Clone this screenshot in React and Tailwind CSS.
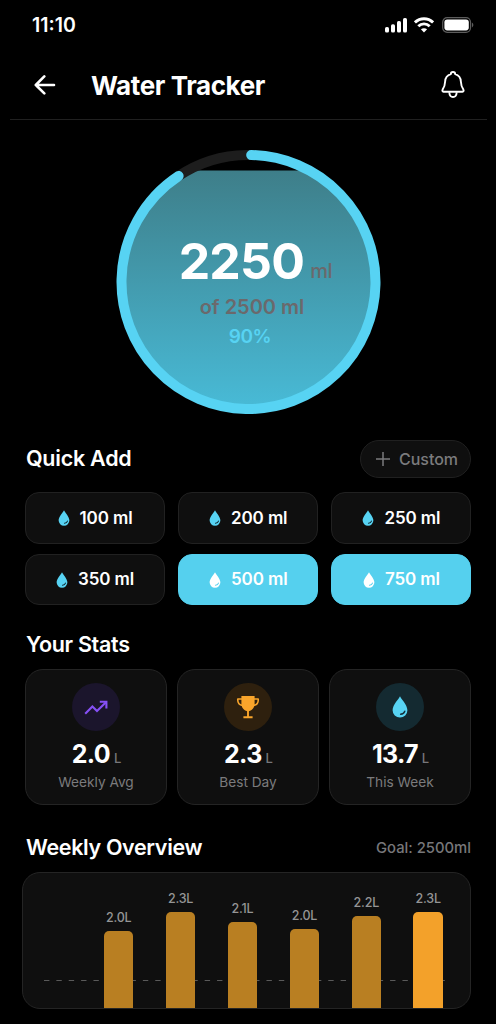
import React, { useState } from 'react';

const amounts = [100, 200, 250, 350, 500, 750];

const week = [
  { label: '', height: 0 },
  { label: '2.0L', height: 77 },
  { label: '2.3L', height: 96 },
  { label: '2.1L', height: 86 },
  { label: '2.0L', height: 79 },
  { label: '2.2L', height: 92 },
  { label: '2.3L', height: 96, today: true },
];

function Drop({ className, shine }) {
  return (
    <svg viewBox="0 0 16 22" className={className} fill="none">
      <path d="M8 0.3C8.8 2.6 15.4 9 15.4 14.2A7.4 7.4 0 0 1 0.6 14.2C0.6 9 7.2 2.6 8 0.3Z" fill="currentColor" />
      <path d="M8.6 18.3C10.8 18.1 12.2 17 12.8 15.2" stroke={shine} strokeWidth="1.4" strokeLinecap="round" />
    </svg>
  );
}

function TrendIcon() {
  return (
    <svg className="mt-px" width="24" height="16" viewBox="0 0 24 16" fill="none" stroke="#8650f5" strokeWidth="2.1" strokeLinejoin="miter">
      <path d="M1.2 13.8L8.4 6.4L13 11L22 2.2" />
      <path d="M15.8 1.8H22.4V8.4" />
    </svg>
  );
}

function TrophyIcon() {
  return (
    <svg width="24" height="24" viewBox="0 0 24 24" fill="none">
      <path d="M5.4 1H18.6V8.5C18.6 12.6 16 16 12 16.4C8 16 5.4 12.6 5.4 8.5Z" fill="#f9a52b" />
      <path d="M6 4H1.8C1.5 7.5 3.4 10 6.6 10.4M18 4H22.2C22.5 7.5 20.6 10 17.4 10.4" stroke="#f9a52b" strokeWidth="1.6" strokeLinejoin="round" />
      <path d="M12 15V21.8M7.4 22.2H16.6" stroke="#f9a52b" strokeWidth="1.9" />
    </svg>
  );
}

function StatusBar() {
  return (
    <div className="h-[50px] pl-8 pr-[22px] flex items-center justify-between">
      <span className="mt-px text-[19.5px] font-semibold text-white">11:10</span>
      <div className="flex items-center">
        <svg width="22" height="16" viewBox="0 0 22 16" fill="#fff">
          <rect x="0" y="10" width="4" height="5.5" rx="1.6" />
          <rect x="6" y="7.2" width="4" height="8.3" rx="1.6" />
          <rect x="12" y="4" width="4" height="11.5" rx="1.6" />
          <rect x="18" y="1" width="4" height="14.5" rx="1.6" />
        </svg>
        <svg className="ml-[7px]" width="20" height="16" viewBox="0 0 20 16" fill="none" stroke="#fff" strokeWidth="2.9">
          <path d="M0.9 5.5C6 0.4 14 0.4 19.1 5.5" />
          <path d="M4.3 9.2C7.5 6.1 12.5 6.1 15.7 9.2" />
          <path d="M10 15.5L6.9 12.3C8.7 10.8 11.3 10.8 13.1 12.3Z" fill="#fff" stroke="none" />
        </svg>
        <svg className="ml-2" width="32" height="16" viewBox="0 0 32 16" fill="none">
          <rect x="0.7" y="0.7" width="27.8" height="14.6" rx="4.5" stroke="#5c5c5c" strokeWidth="1.2" />
          <rect x="2.4" y="2.6" width="24.4" height="10.8" rx="2.8" fill="#fff" />
          <path d="M29.9 5.6C31.8 6.3 31.8 9.7 29.9 10.4Z" fill="#5c5c5c" />
        </svg>
      </div>
    </div>
  );
}

function Header() {
  return (
    <div className="ml-[10px] mr-[9px] h-[70px] pl-6 pr-[22px] flex items-center border-b border-[#202020]">
      <svg width="22" height="20" viewBox="0 0 22 20" fill="none" stroke="#fff" strokeWidth="2.6" strokeLinecap="round" strokeLinejoin="round">
        <path d="M20 10H1.8M10.3 1.4L1.8 10L10.3 18.4" />
      </svg>
      <h1 className="ml-[35px] mt-[2px] flex-1 text-[26px] font-bold tracking-[-0.4px] text-white">Water Tracker</h1>
      <svg width="24" height="28" viewBox="0 0 24 28" fill="none" stroke="#fff" strokeWidth="1.9" strokeLinejoin="round">
        <path d="M9.8 3.2A2.2 2.2 0 0 1 14.2 3.2C17.8 4.2 19.7 7 19.9 10.7C20.1 14.6 20.6 16.2 22.3 18.4C23 19.6 22.6 20.8 21.5 20.8H2.5C1.4 20.8 1 19.6 1.7 18.4C3.4 16.2 3.9 14.6 4.1 10.7C4.3 7 6.2 4.2 9.8 3.2Z" />
        <path d="M8.3 21.2C8.5 24.6 10.3 26 12 26C13.7 26 15.5 24.6 15.7 21.2" />
      </svg>
    </div>
  );
}

function ProgressRing() {
  return (
    <div className="relative mx-auto mt-[30px] w-[265px] h-[264px]">
      <svg width="265" height="264" viewBox="-0.5 0 265 264" fill="none">
        <defs>
          <linearGradient id="water" x1="0" y1="20" x2="0" y2="256" gradientUnits="userSpaceOnUse">
            <stop offset="0" stopColor="#3e7e89" />
            <stop offset="1" stopColor="#48bad6" />
          </linearGradient>
          <clipPath id="bowl">
            <circle cx="132" cy="132" r="125" />
          </clipPath>
        </defs>
        <rect x="0" y="20.5" width="264" height="240" fill="url(#water)" clipPath="url(#bowl)" />
        {/* remaining part of the goal */}
        <circle cx="132" cy="132" r="127" stroke="#1d1d1d" strokeWidth="10" pathLength="360" strokeDasharray="36 360" transform="rotate(236 132 132)" />
        <circle cx="132" cy="132" r="127" stroke="#57d3f3" strokeWidth="10" strokeLinecap="round" pathLength="360" strokeDasharray="325.4 360" transform="rotate(-88.8 132 132)" />
      </svg>
      <div className="absolute inset-0 flex flex-col items-center">
        <div className="mt-[81px] ml-[15px] flex items-baseline leading-[60px]">
          <span className="text-[50px] font-bold tracking-[-0.8px] text-white">2250</span>
          <span className="relative -top-px ml-[6px] text-[20px] font-medium tracking-[-0.3px] text-[#6b696c]">ml</span>
        </div>
        <div className="-mt-[7px] ml-[8px] text-[20px] leading-6 font-semibold text-[#6b696c]">of 2500 ml</div>
        <div className="mt-[6px] ml-[4px] text-[19px] leading-6 font-semibold tracking-[-0.5px] text-[#57d3f3]">90%</div>
      </div>
    </div>
  );
}

function StatCard({ icon, circle, value, label }) {
  return (
    <div className="h-[136px] pt-[13px] rounded-[18px] border border-[#242424] bg-[#0f0f0f] flex flex-col items-center">
      <div className={`w-12 h-12 rounded-full flex items-center justify-center ${circle}`}>{icon}</div>
      <div className="mt-[7px] pl-px flex items-baseline leading-8">
        <span className="text-[25px] font-bold tracking-[-0.7px] text-white">{value}</span>
        <span className="ml-1 text-[13px] font-medium text-[#77777a]">L</span>
      </div>
      <span className="-mt-[2px] text-[13.7px] leading-5 text-[#7b7b7d]">{label}</span>
    </div>
  );
}

function App() {
  const [selected, setSelected] = useState([500, 750]);

  const toggleAmount = (ml) => {
    if (selected.includes(ml)) {
      setSelected(selected.filter((item) => item !== ml));
    } else {
      setSelected([...selected, ml]);
    }
  };

  return (
    <div className="w-[496px] h-[1024px] overflow-hidden bg-black font-['Inter',sans-serif]">
      <StatusBar />
      <Header />
      <ProgressRing />

      <div className="mt-[26px] px-[25px] flex items-center justify-between">
        <h2 className="-mt-[2px] pl-px text-[21.5px] font-semibold tracking-[-0.25px] text-white">Quick Add</h2>
        <button className="w-[111px] h-[38px] pl-[3px] flex items-center justify-center gap-[9px] rounded-full border border-[#202020] bg-[#0f0f0f] text-[16px] font-medium text-[#7b7b7d]">
          <svg width="14" height="14" viewBox="0 0 14 14" stroke="currentColor" strokeWidth="1.5">
            <path d="M7 0V14M0 7H14" />
          </svg>
          Custom
        </button>
      </div>

      <div className="mt-[14px] pl-[24.5px] pr-[25px] grid grid-cols-3 gap-x-[13px] gap-y-[10px]">
        {amounts.map((ml) => {
          const active = selected.includes(ml);
          return (
            <button
              key={ml}
              onClick={() => toggleAmount(ml)}
              className={`h-[51.5px] pt-px pl-px flex items-center justify-center gap-[10px] rounded-[14px] border text-[17px] font-semibold tracking-[-0.1px] text-white ${active ? 'border-[#55d0ee] bg-[#55d0ee]' : 'border-[#212121] bg-[#0f0f0f]'}`}
            >
              <Drop className={active ? 'w-3 h-4 text-white' : 'w-3 h-4 text-[#57d3f3]'} shine={active ? '#55d0ee' : '#0f2a33'} />
              {ml} ml
            </button>
          );
        })}
      </div>

      <h2 className="mt-[23px] mb-[9px] pl-[26px] text-[21.5px] leading-8 font-semibold tracking-[-0.3px] text-white">Your Stats</h2>
      <div className="px-[25px] grid grid-cols-3 gap-[10px]">
        <StatCard icon={<TrendIcon />} circle="bg-[#1b152c]" value="2.0" label="Weekly Avg" />
        <StatCard icon={<TrophyIcon />} circle="bg-[#2e200e]" value="2.3" label="Best Day" />
        <StatCard icon={<Drop className="w-[16px] h-[22px] text-[#57d3f3]" shine="#14303a" />} circle="bg-[#142a31]" value="13.7" label="This Week" />
      </div>

      <div className="mt-[26px] px-[25px] flex items-center justify-between">
        <h2 className="pl-px text-[21.5px] leading-8 font-semibold tracking-[-0.35px] text-white">Weekly Overview</h2>
        <span className="mt-[2px] text-[14.8px] font-medium text-[#77777a]">Goal: 2500ml</span>
      </div>
      <div className="relative mt-[9px] ml-[22px] mr-[25px] h-[137px] pl-[19px] pr-[27px] flex items-end justify-between rounded-[18px] border border-[#242424] bg-[#0f0f0f]">
        {/* goal line */}
        <svg className="absolute left-[21px] bottom-[27px]" width="402" height="1" stroke="#5a5a5a">
          <path d="M0 0.5H402" strokeDasharray="5.4 6.96" />
        </svg>
        {week.map((day, i) => (
          <div key={i} className="relative w-[29.5px] flex flex-col items-center">
            <span className="mb-[5px] text-[12.5px] leading-4 font-medium tracking-[-0.2px] text-[#959595]">{day.label}</span>
            <div
              className={`w-full rounded-t-[5px] ${day.today ? 'bg-[#f3a12a]' : 'bg-[#b97f22]'}`}
              style={{ height: day.height }}
            />
          </div>
        ))}
      </div>
    </div>
  );
}

export default App;
